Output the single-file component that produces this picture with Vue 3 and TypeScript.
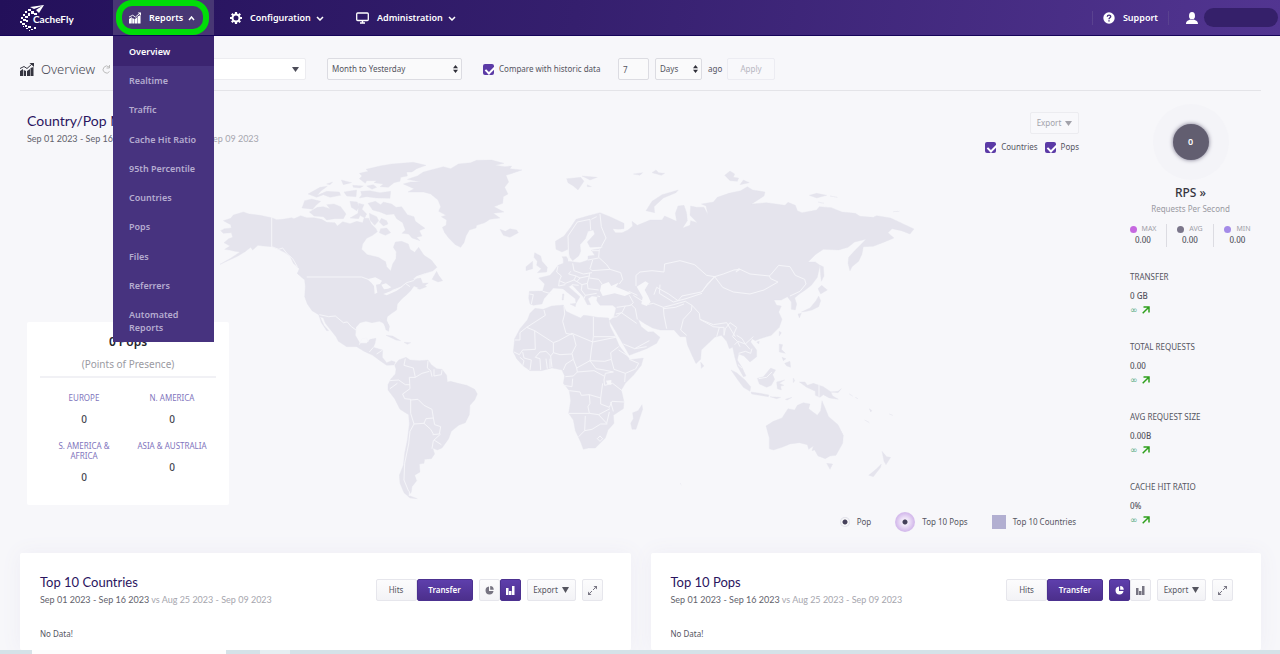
<script setup lang="ts">
import { ref } from 'vue'

interface Stat { label: string; value: string }
interface Region { name: string; count: number }
interface Panel { id: string; title: string; chart: 'pie' | 'bar' }

const reportLinks: string[] = [
  'Overview', 'Realtime', 'Traffic', 'Cache Hit Ratio', '95th Percentile',
  'Countries', 'Pops', 'Files', 'Referrers', 'Automated Reports',
]
const regions: Region[] = [
  { name: 'EUROPE', count: 0 },
  { name: 'N. AMERICA', count: 0 },
  { name: 'S. AMERICA & AFRICA', count: 0 },
  { name: 'ASIA & AUSTRALIA', count: 0 },
]
const rates = [
  { label: 'MAX', value: '0.00', tone: 'max' },
  { label: 'AVG', value: '0.00', tone: 'avg' },
  { label: 'MIN', value: '0.00', tone: 'min' },
]
const stats: Stat[] = [
  { label: 'TRANSFER', value: '0 GB' },
  { label: 'TOTAL REQUESTS', value: '0.00' },
  { label: 'AVG REQUEST SIZE', value: '0.00B' },
  { label: 'CACHE HIT RATIO', value: '0%' },
]
const panels = ref<Panel[]>([
  { id: 'countries', title: 'Top 10 Countries', chart: 'bar' },
  { id: 'pops', title: 'Top 10 Pops', chart: 'pie' },
])
const compare = ref(true)
const showCountries = ref(true)
const showPops = ref(true)
const daysAgo = ref('7')
</script>

<template>
  <div class="page">
    <header class="topbar">
      <a href="#" class="logo" aria-label="CacheFly">
        <svg width="54" height="28" viewBox="0 0 54 28">
          <path d="M10 2 24 0 19 8 16 5 22 1 14 4Z" fill="#fff" />
          <g fill="#fff">
            <path d="M8 4h3v2H8zM11 6h3v3h-3zM14 8h3v2h-3zM5 6h2v2H5zM8 8h2v3H8zM3 9h2v2H3zM5 11h3v2H5zM1 12h2v2H1zM3 14h3v2H3zM0 16h2v2H0zM6 15h2v2H6zM2 18h3v2H2zM5 20h2v2H5zM8 21h3v2H8zM3 21h1v1H3zM6 23h2v1H6zM11 24h2v1h-2zM14 22h2v2h-2zM9 25h1v1H9z" />
            <text x="13" y="18" class="logo-text">CacheFly</text>
          </g>
        </svg>
      </a>
      <nav class="nav">
        <div class="tab active">
          <button type="button" class="tab-btn">
            <svg width="12" height="12" viewBox="0 0 13 12" fill="currentColor"><path d="M0 7 3 5v7H0zM3.500 6 6 7v5H3.500zM6.500 7 9 5v7H6.500zM9.500 4 12.500 3v9h-3z" /><path d="M0 5 4 3l3 2 4-3.500" fill="none" stroke="currentColor" /><path d="M9.500 0H13v3.500z" /></svg>
            <span>Reports</span>
            <svg width="7" height="5" viewBox="0 0 7 5" class="line"><path d="m1 4 2.500-3L6 4" /></svg>
          </button>
          <span class="ring"></span>
          <ul class="menu">
            <li v-for="(link, i) in reportLinks" :key="link">
              <a href="#" :class="{ current: i === 0 }">{{ link }}</a>
            </li>
          </ul>
        </div>
        <div class="tab">
          <button type="button" class="tab-btn">
            <svg width="12" height="12" viewBox="0 0 12 12" fill="none" stroke="currentColor"><circle cx="6" cy="6" r="3.500" stroke-width="2" /><path d="M6 0v2M6 10v2M0 6h2M10 6h2M1.800 1.800l1.400 1.400M8.800 8.800l1.400 1.400M1.800 10.200l1.400-1.400M8.800 3.200l1.400-1.400" stroke-width="2.200" /></svg>
            <span>Configuration</span>
            <svg width="8" height="5" viewBox="0 0 8 5" class="line"><path d="m1 1 3 3 3-3" /></svg>
          </button>
        </div>
        <div class="tab">
          <button type="button" class="tab-btn">
            <svg width="13" height="12" viewBox="0 0 13 12" fill="none" stroke="currentColor"><rect x=".7" y="1" width="11.600" height="7.500" rx="1" stroke-width="1.300" /><path d="M6.500 8.500v2M4 11h5" stroke-width="1.500" /></svg>
            <span>Administration</span>
            <svg width="8" height="5" viewBox="0 0 8 5" class="line"><path d="m1 1 3 3 3-3" /></svg>
          </button>
        </div>
      </nav>
      <a href="#" class="support">
        <svg width="12" height="12" viewBox="0 0 12 12"><circle cx="6" cy="6" r="5.700" fill="#fff" /><path d="M4.300 4.700C4.300 2.500 7.800 2.600 7.700 4.600 7.600 5.800 6 5.700 6 7.200M6 8.200v1.300" fill="none" stroke="#45307f" stroke-width="1.400" /></svg>
        <span>Support</span>
      </a>
      <button type="button" class="account" aria-label="Account">
        <svg width="12" height="12" viewBox="0 0 12 12" fill="#fff"><ellipse cx="6" cy="3.800" rx="3" ry="3.800" /><path d="M0 12c0-3 2-3.500 4.500-4.500C5.500 8.200 6.500 8.200 7.500 7.500 10 8.500 12 9 12 12z" /></svg>
        <span class="redacted"></span>
      </button>
    </header>

    <form class="toolbar" @submit.prevent>
      <h1 class="title">
        <svg width="14" height="13" viewBox="0 0 14 13" fill="#34343f"><path d="M0 8l3-2v7H0zM3.700 7 6 8v5H3.700zM7 8l3-2v7H7zM10.500 5 13.500 4v9h-3z" /><path d="M0 5.500 4 3.500l3 2 5-4.500" fill="none" stroke="#34343f" /><path d="M9.500 0H14v4z" /></svg>
        <span>Overview</span>
        <svg width="9" height="9" viewBox="0 0 9 9" fill="none" stroke="#bbb"><path d="M7.500 6.500A3.500 3.500 0 1 1 7 2M7.500 0v3h-3" /></svg>
      </h1>
      <div class="pick wide">
        <select aria-label="Service"><option></option></select>
        <svg width="7" height="5" viewBox="0 0 7 5"><path d="M0 0h7L3.500 5z" fill="#4c4c58" /></svg>
      </div>
      <div class="pick month">
        <select aria-label="Period"><option>Month to Yesterday</option></select>
        <svg width="5" height="8" viewBox="0 0 5 8"><path d="M0 3.300 2.500 0 5 3.300zM0 4.700h5L2.500 8z" fill="#30303a" /></svg>
      </div>
      <label class="check compare"><input v-model="compare" type="checkbox"><span>Compare with historic data</span></label>
      <input v-model="daysAgo" class="amount" aria-label="Amount" type="text">
      <div class="pick unit">
        <select aria-label="Unit"><option>Days</option></select>
        <svg width="5" height="8" viewBox="0 0 5 8"><path d="M0 3.300 2.500 0 5 3.300zM0 4.700h5L2.500 8z" fill="#30303a" /></svg>
      </div>
      <span class="ago">ago</span>
      <button type="submit" class="apply" disabled>Apply</button>
    </form>

    <main>
      <section class="overview">
        <div class="map-area">
          <div class="map-head">
            <div>
              <h2>Country/Pop Map</h2>
              <p class="dates">Sep 01 2023 - Sep 16 2023 <span>vs Aug 25 2023 - Sep 09 2023</span></p>
            </div>
            <div class="map-tools">
              <button type="button" class="export faded">Export <svg width="7" height="5" viewBox="0 0 7 5"><path d="M0 0h7L3.500 5z" fill="currentColor" /></svg></button>
              <div class="toggles">
                <label class="check"><input v-model="showCountries" type="checkbox"><span>Countries</span></label>
                <label class="check"><input v-model="showPops" type="checkbox"><span>Pops</span></label>
              </div>
            </div>
          </div>

          <div class="map-body">
            <div class="pops">
              <h3>0 Pops</h3>
              <p>(Points of Presence)</p>
              <dl>
                <div v-for="region in regions" :key="region.name">
                  <dt>{{ region.name }}</dt>
                  <dd>{{ region.count }}</dd>
                </div>
              </dl>
            </div>
            <svg class="world" viewBox="220 155 700 350" role="img" aria-label="World map">
              <!-- North America and Greenland -->
              <g transform="translate(210 150) scale(.33333)">
                <path class="land" d="M40 212 62 205 70 195 100 186 118 192 150 196 185 203 200 209 218 208 245 203 252 206 272 197 290 203 312 203 335 208 350 217 375 218 382 228 398 215 420 221 440 214 458 218 462 205 476 205 484 222 498 236 502 245 488 256 470 265 458 282 455 298 472 314 505 322 527 335 530 350 542 363 548 342 558 326 559 306 550 292 556 276 575 274 595 282 600 298 614 307 626 292 642 316 664 330 681 352 668 363 645 370 620 378 608 388 632 384 638 400 655 399 640 410 626 414 612 408 602 422 590 434 576 446 562 462 560 480 545 490 532 500 530 512 538 530 536 544 528 540 522 520 508 514 486 518 468 514 450 518 438 532 436 556 450 580 470 580 480 568 498 565 495 580 490 592 518 600 517 622 530 638 545 632 556 636 552 645 530 646 510 632 488 616 462 604 440 590 410 590 385 574 378 560 362 540 346 520 340 504 330 500 342 526 356 542 350 542 334 518 326 494 306 482 292 462 284 440 286 410 284 390 262 370 268 356 250 340 240 318 222 306 205 298 186 290 160 288 144 286 128 300 122 292 104 306 80 320 50 334 28 344 62 325 90 306 74 304 58 300 44 298 60 288 42 278 56 266 68 262 64 248 40 250 32 242 44 236 64 234 62 224Z" />
                <path class="land" d="M580 102 602 96 632 96 592 88 622 78 640 66 700 50 722 56 745 42 782 38 800 31 845 30 882 40 856 46 885 50 905 48 900 56 936 60 888 76 896 96 884 112 894 132 880 140 878 160 852 170 882 186 850 190 870 204 840 208 824 218 800 226 798 234 778 240 768 258 762 278 752 292 736 284 716 264 704 248 697 232 708 226 710 210 694 200 708 196 686 184 692 170 684 150 662 132 640 126 594 126 612 116 598 110Z" />
                <path class="land" d="M448 70 475 64 468 58 510 48 545 42 610 37 648 46 620 56 606 66 590 66 592 78 572 82 570 94 552 98 535 112 510 110 520 102 492 98 500 92 470 92 466 100 448 86 456 78Z" />
                <path class="land" d="M452 124 480 122 510 128 542 124 540 145 500 144 470 140 448 144 455 134ZM394 90 425 98 400 104ZM402 126 440 120 438 140 410 138ZM294 132 330 112 352 109 332 124 322 136 350 124 388 126 392 136 360 142 340 134 320 142ZM350 102 368 96 360 104ZM428 106 460 108 450 114 430 112ZM470 108 490 104 500 112 486 118Z" />
                <path class="land" d="M284 152 305 147 332 154 318 166 308 178 296 176 276 174ZM298 186 322 172 340 170 360 176 350 164 372 162 392 170 408 192 400 206 374 206 350 210 340 200 312 198ZM420 154 442 156 446 172 440 182 424 172ZM446 160 462 164 456 178 470 192 464 204 450 196 446 206 420 204 444 190Z" />
                <path class="land" d="M474 160 496 154 512 164 520 156 545 162 558 172 575 170 592 194 612 200 616 214 645 235 628 242 636 258 620 262 630 272 606 264 596 252 576 250 586 240 578 218 560 206 552 192 530 194 510 186 488 180ZM514 205 530 212 534 222 520 228 508 216ZM512 236 530 234 542 248 526 256 508 248ZM478 190 500 200 506 212 494 226 480 210Z" />
                <path class="land" d="M666 388 680 364 686 376 698 392 684 396ZM622 416 644 406 650 410 630 418ZM870 238 886 244 900 236 920 240 925 248 900 262 880 256ZM262 370 284 380 292 388 278 384Z" />
                <path class="water" d="M472 388 496 382 516 392 510 402 498 404 502 428 494 432 492 408 484 398ZM514 404 528 400 544 412 534 416 522 418ZM520 432 545 422 580 408 560 422 530 436Z" />
                <path class="edge" d="M185 202V290L206 298 218 294 232 312 248 326 262 350M290 381H455L480 390M545 422 572 412 590 398 610 392 624 380 645 372M328 494 356 500 376 498 400 518 412 516 424 530 438 540M448 584 456 566 470 564 474 576M490 592 478 606M518 600 500 612M586 400 600 410" />
              </g>
              <!-- South America and Africa -->
              <g transform="translate(360 320) scale(.33333)">
                <path class="land" d="M104 135 116 120 138 112 150 120 178 122 204 120 214 134 230 146 246 148 260 166 262 186 272 184 294 190 320 196 344 208 352 222 344 240 330 256 328 284 316 308 296 316 274 334 266 356 246 384 232 390 218 384 224 402 214 416 194 418 192 430 178 432 180 456 164 466 170 482 156 500 154 516 146 526 172 536 150 534 132 518 120 490 118 466 130 436 134 400 142 360 148 312 146 284 120 268 104 236 84 210 84 194 92 178 106 162 108 148Z" />
                <path class="land" d="M525-35 550-32 575-42 610-45 618-26 640-16 662-6 670-14 684-13 712-8 746-6 750 18 766 50 778 78 800 106 810 119 850 114 844 136 820 166 796 190 784 210 792 245 790 266 760 286 762 310 744 330 736 354 706 384 686 384 670 388 662 366 646 332 640 300 626 280 632 242 628 212 610 190 614 168 606 150 576 144 545 152 510 152 490 138 470 116 460 96 464 56 480 26 502 0 510-20Z" />
                <path class="land" d="M846 254 848 268 840 292 828 328 816 328 812 310 820 296 818 278 834 272ZM78 46 98 48 122 62 108 60ZM132 67 152 68 142 73ZM62-4 76-4 88 18 84 30 74 16Z" />
                <path class="edge" d="M136 116 132 136 160 144 166 172 148 172 150 206 128 222 134 236 152 238 152 280 162 312 150 334 146 372 134 430 132 480 146 514M88 182 116 180 136 194 150 194M90 206 112 190M204 122 202 144 212 152 216 170M246 150 244 164 222 168 222 148M166 172 186 160 208 154M152 240 174 238 192 256 216 268 220 294 198 296 192 310 162 312M220 294 224 314 242 320 238 342 218 344M192 310 212 328 220 342M242 342 220 362 216 386M222 360 244 374M148 514V528" />
                <path class="edge" d="M552-30 556-14 528 4 500 22 524 32 580 68 596 62 636 40 698 66 776 50M612-42 614-18 608 4 618 40 638 44M700-10V50M700 50 694 90 690 124M702 50H766M640 44 648 76 636 100 640 118 618 132 610 150M524 32 526 88 488 90 478 104 462 96M464 60H480V38L500 22M580 68 580 98 600 104 636 102M580 98 572 108 576 142M526 112 540 96 558 94 572 108M526 112 540 116 542 150M558 116 562 146M570 116 570 144M488 96 492 114 514 120 510 150M480 112 492 122 488 138M640 118 650 144 690 122 708 146 732 150 760 156M690 122 734 124 754 118 752 98 776 80M776 90 804 108M754 118 762 148 796 160 824 148M808 118 836 130 826 148M796 160 794 186M760 156 736 160 732 180 734 196 758 190 786 212M650 144 652 156 702 152 732 168M616 170 640 168 652 156M610 196 636 200 638 176M628 212 660 216 664 226 688 224 690 250 684 260 688 280 626 280M688 224 722 234 728 190M722 234 722 252 748 262 756 244 792 246M752 246 760 274M688 280 716 284 750 266M716 284 740 310 748 276M676 288 674 332 656 350M674 332 696 328 722 312 742 312M712 356 720 348 728 356 720 364Z" />
                <path class="water" d="M738 182 754 180 754 194 742 192Z" />
              </g>
              <!-- Europe and Asia -->
              <g transform="translate(500 150) scale(.33333)">
                <path class="land" d="M100 466 90 462 86 444 88 424 128 423 134 402 116 384 150 376 162 362 174 346 190 340 190 322 200 320 206 334 240 338 264 330 264 318 284 316 274 300 300 296 310 290 270 292 262 276 284 252 280 240 264 244 256 266 240 284 242 304 236 318 218 332 210 322 204 298 186 306 168 298 166 274 192 258 212 232 228 208 262 198 300 188 330 200 372 220 372 236 356 238 338 236 346 248 366 248 384 240 398 228 396 214 412 226 450 210 486 210 494 198 530 214 526 190 534 168 552 166 560 190 562 212 548 234 570 226 572 212 592 218 570 196 572 168 590 172 612 172 624 194 618 168 604 162 640 156 652 142 686 130 722 122 742 110 758 120 795 126 792 138 755 162 800 158 855 166 864 157 886 166 892 182 906 188 950 180 958 170 994 173 1026 186 1066 190 1080 199 1120 202 1130 197 1172 204 1210 222 1242 237 1230 252 1204 242 1176 236 1164 248 1182 264 1148 278 1120 289 1090 290 1086 312 1076 334 1056 350 1050 363 1044 340 1046 322 1066 300 1098 268 1064 276 1044 292 1016 300 970 298 946 314 924 336 946 336 960 346 952 382 934 406 916 420 898 432 884 444 890 462 886 480 874 478 874 456 862 440 844 450 822 450 830 466 844 468 836 486 846 508 838 532 814 556 780 566 766 572 756 566 752 576 770 600 770 620 750 636 732 618 716 612 712 630 726 652 738 678 730 680 712 648 704 620 698 592 688 596 680 574 664 556 644 562 604 600 602 628 588 641 576 616 562 584 558 560 540 560 522 540 480 540 458 534 436 522 414 508 424 530 444 546 460 545 480 562 470 580 440 596 388 616 370 584 346 542 328 512 342 500 348 474 338 466 300 466 290 452 292 440 276 438 264 446 272 464 262 464 250 440 216 404 206 410 240 440 228 460 226 446 188 416 160 414 132 446 126 462Z" />
                <path class="land" d="M104 308 122 318 126 334 142 352 140 366 112 368 124 356 110 346 112 334 102 322ZM78 350 98 334 98 356 78 362ZM200 86 222 84 242 82 252 94 234 120 220 108 204 98ZM246 78 292 82 270 90ZM262 104 274 110 262 110ZM438 182 456 154 486 134 535 120 528 128 490 144 462 170 464 188ZM400 72 428 68 420 76ZM456 68 468 60 476 68 494 70 484 76ZM186 320 198 320 194 332ZM210 462 228 460 226 470ZM188 432H192L190 450H186ZM674 76 690 63 704 72 700 82 716 84 712 94 690 92ZM720 104 730 90 748 98ZM928 136 950 130 980 136 950 144ZM990 138 1012 142ZM954 156 972 160ZM1180 185 1198 184Z" />
                <path class="land" d="M960 346 970 350 972 378 964 394 962 376ZM954 416 965 406 982 420 962 432ZM904 486 930 474 948 452 956 438 962 452 956 470 936 480 920 484ZM894 492 904 490 898 504Z" />
                <path class="water" d="M300 422 304 404 326 396 334 408 342 404 356 398 348 410 394 430 374 438 344 430 308 438ZM410 410 436 394 446 400 434 420 444 438 452 456 440 468 424 462 428 442ZM190 416 210 446 200 446Z" />
                <path class="edge" d="M206 334 204 258 232 216 270 208 272 240M300 192 304 230 318 264 304 290M274 208 290 200M298 298 296 322 320 344 330 358 362 368 368 388 358 402M264 330 296 324M276 302H298M278 330 270 356 276 362 330 358M218 340 222 362 250 372 276 368M174 348 170 366 184 378 178 392 196 400 222 390 228 378 206 372 212 364M228 378 240 384 268 378 268 368M222 390 246 404 262 400 268 378M240 384 230 396M262 400 264 416 296 420M268 384 296 388 306 402M246 404 244 420 256 436 290 430M216 404 236 406M256 436 252 446M88 432 100 434 94 462M128 424 156 432M178 392 176 408 196 404M292 438 300 440M388 436 400 458 392 466 350 472M392 462 406 476 412 508M348 492 366 488 376 468M336 502 350 500 364 488 410 520M400 436 428 454M386 424 412 436M440 464 460 460 490 472 492 496 500 536M408 408 408 376 420 366 456 362 492 366 494 342 540 332 584 344 620 376 644 380 604 426 546 438 534 452 506 432 470 412 462 434M480 404 478 430 520 456 558 446 606 430M490 472 520 464 556 454 576 466 574 482 550 508 542 540 560 556M490 476 526 472 552 462M644 380 670 372 702 360 720 358 708 366 716 356 750 372 808 378 814 372 836 346 870 350 886 376 914 388 918 402 900 424 870 438M576 466 598 490 600 508 640 524 680 518 696 544 706 560M600 508 640 530 658 532 650 560M644 380 662 404 668 412 700 426 750 432 792 420 834 396 812 386 808 378M658 532H672V556L676 536 690 518 710 532 698 560 712 574 720 590M710 556 726 566 736 582 760 560M704 584 714 574 736 582 750 598M716 610 736 604 752 610 756 596M370 582 404 596 440 590M404 596 448 572M644 380 622 402 606 426" />
              </g>
              <!-- Southeast Asia and Oceania -->
              <g transform="translate(660 320) scale(.33333)">
                <path class="land" d="M213 150 230 158 255 180 272 200 270 214 250 202 232 178ZM273 216 300 220 327 225 325 230 275 222ZM292 175 310 170 332 144 347 150 338 164 344 178 334 196 320 202 298 192ZM350 186 374 180 358 190 372 196 362 198 364 210 352 206ZM418 186 435 186 442 196 460 190 490 200 512 215 518 228 535 238 508 234 490 224 480 232 466 226 466 214 440 202ZM512 216 534 214 544 206 534 218ZM330 230 362 232 350 236ZM376 238 396 232 382 240ZM358 72 368 74 364 88 376 100 358 96ZM374 130 390 124 392 142 380 138ZM366 112 378 116 370 122ZM358 34 364 38 358 48ZM122 126 132 138 124 145ZM400 174 404 182 400 188ZM290 66 298 64 296 72Z" />
                <path class="land" d="M318 318 340 304 366 294 384 266 404 270 412 256 430 248 450 252 446 266 472 286 482 272 486 242 496 266 506 290 534 314 550 346 548 370 528 406 510 408 496 416 474 408 464 390 456 392 460 378 446 388 442 374 418 368 390 372 366 382 340 390 328 386 328 354ZM500 430 518 432 510 448ZM666 394 680 410 692 412 678 434 672 424ZM664 432 662 442 640 470 626 466 648 448ZM568 222 578 228ZM586 232 594 236ZM628 266 636 272 632 276ZM614 300 628 308ZM688 282 698 286ZM60 490 64 494Z" />
                <path class="edge" d="M477 194V230M296 176 320 172 336 156M234 134 246 144" />
              </g>
            </svg>
          </div>

          <ul class="legend">
            <li><i class="dot"></i>Pop</li>
            <li><i class="dot top"></i>Top 10 Pops</li>
            <li><i class="square"></i>Top 10 Countries</li>
          </ul>
        </div>

        <aside class="metrics">
          <div class="halo"><div class="gauge">0</div></div>
          <h2><a href="#">RPS »</a></h2>
          <p class="sub">Requests Per Second</p>
          <ul class="rates">
            <li v-for="rate in rates" :key="rate.label">
              <span class="rate-label"><i :class="rate.tone"></i>{{ rate.label }}</span>
              <b>{{ rate.value }}</b>
            </li>
          </ul>
          <dl class="stats">
            <div v-for="stat in stats" :key="stat.label">
              <dt>{{ stat.label }}</dt>
              <dd>{{ stat.value }}</dd>
              <dd class="trend"><span>∞</span><svg width="8" height="8" viewBox="0 0 8 8"><path d="M.700 7.300 7 1M1.500 1H7v5.500" fill="none" stroke="#2fa01c" stroke-width="1.500" /></svg></dd>
            </div>
          </dl>
        </aside>
      </section>

      <section class="cards">
        <article v-for="panel in panels" :key="panel.id" class="card">
          <div class="card-head">
            <div>
              <h2>{{ panel.title }}</h2>
              <p class="dates">Sep 01 2023 - Sep 16 2023 <span>vs Aug 25 2023 - Sep 09 2023</span></p>
            </div>
            <div class="actions">
              <div class="group">
                <button type="button" class="hits">Hits</button>
                <button type="button" class="transfer on">Transfer</button>
              </div>
              <div class="group">
                <button type="button" class="icon" :class="{ on: panel.chart === 'pie' }" aria-label="Pie chart" @click="panel.chart = 'pie'">
                  <svg width="9" height="9" viewBox="0 0 9 9" fill="currentColor"><path d="M4 .500V5h4.500A4 4 0 1 1 4 .500" /><path d="M5.200 0A4 4 0 0 1 8.800 3.800H5.200z" /></svg>
                </button>
                <button type="button" class="icon" :class="{ on: panel.chart === 'bar' }" aria-label="Bar chart" @click="panel.chart = 'bar'">
                  <svg width="9" height="10" viewBox="0 0 9 10" fill="currentColor"><path d="M0 3h2.500v7H0zM3 6h2.500v4H3zM6 1h2.500v9H6z" /></svg>
                </button>
              </div>
              <button type="button" class="export">Export <svg width="7" height="6" viewBox="0 0 7 6"><path d="M0 0h7L3.500 6z" fill="currentColor" /></svg></button>
              <button type="button" class="icon" aria-label="Expand">
                <svg width="9" height="9" viewBox="0 0 9 9" fill="currentColor"><path d="M5.500 0H9v3.500zM0 5.500V9h3.500z" /><path d="M5 4l2-2M4 5 2 7" stroke="currentColor" /></svg>
              </button>
            </div>
          </div>
          <p class="empty">No Data!</p>
        </article>
      </section>
    </main>
    <footer class="strip"><span></span><span></span></footer>
  </div>
</template>

<style>
body { background: #f7f7fa; }
</style>

<style scoped>
.page { font-family: "Noto Sans", "Open Sans", sans-serif; font-size: 8px; line-height: 12px; color: #55555f; background: #f7f7fa; }
.page * { box-sizing: border-box; }
h1, h2, h3, p, ul, dl, dd { margin: 0; padding: 0; font-weight: 400; }
ul { list-style: none; }
a { color: inherit; text-decoration: none; }
button, input, select { font: inherit; color: inherit; margin: 0; }
button { cursor: pointer; }
svg { flex: none; }

.topbar { display: flex; height: 36px; border-bottom: 1px solid #16045a; background: linear-gradient(100deg, #23105a, #351f6e 45%, #523591); color: #fff; }
.logo { width: 113px; padding: 5px 0 0 20px; }
.logo-text { font: 700 10px Lato, sans-serif; }
.nav { display: flex; flex: 1; }
.tab { position: relative; min-width: 126px; }
.tab.active { min-width: 101px; background: #483774; }
.tab-btn { display: flex; align-items: center; gap: 8px; height: 36px; padding: 0 16px; border: 0; background: none; font-size: 9px; font-weight: 600; white-space: nowrap; }
.tab-btn svg:last-child { margin-left: -3px; }
.line { fill: none; stroke: currentColor; stroke-width: 1.500; }
.ring { position: absolute; inset: 0 5px 0 3px; border: 6px solid #00dd08; border-radius: 16px; pointer-events: none; }
.menu { position: absolute; z-index: 2; top: 36px; left: 0; width: 100%; min-height: 306px; display: flex; flex-direction: column; justify-content: space-between; background: #47337f; }
.menu a { display: block; padding: 8px 4px 8px 16px; color: #b5acd0; font-size: 9px; font-weight: 600; line-height: 13px; }
.menu li:last-child a { width: min-content; }
.menu .current { padding-top: 9px; background: #3b2470; color: #fff; }
.support { display: flex; align-items: center; align-self: center; gap: 8px; height: 14px; padding: 0 10px; border: solid #5a4290; border-width: 0 1px; font-size: 9px; font-weight: 600; }
.account { display: flex; align-items: center; gap: 6px; margin-left: 17px; padding: 0 2px 0 0; border: 0; background: none; }
.redacted { width: 74px; height: 19px; border-radius: 10px; background: #35206a; }

.toolbar { display: flex; align-items: center; height: 55px; margin: 0 19px 0 20px; padding-top: 12px; border-bottom: 1px solid #e4e4e8; }
.title { display: flex; align-items: center; gap: 7px; width: 104px; font-size: 13px; font-weight: 300; line-height: 20px; color: #4a4a55; }
.pick { position: relative; height: 22px; }
.pick select { appearance: none; width: 100%; height: 100%; padding: 0 4px; border: 1px solid #dcdce2; border-radius: 2px; background: #fafafb; }
.pick svg { position: absolute; top: 7px; right: 4px; pointer-events: none; }
.wide { width: 182px; }
.wide select { border-color: #ececf0; background: #fff; }
.wide svg { top: 9px; right: 7px; }
.month { width: 135px; margin: 0 21px; }
.check { display: inline-flex; align-items: center; gap: 5px; }
.check input { position: relative; appearance: none; width: 11px; height: 11px; border-radius: 2px; background: #5b3aa6; }
.check input:checked::after { content: ""; position: absolute; left: 4px; top: 1px; width: 4px; height: 7px; border: solid #fff; border-width: 0 2px 2px 0; transform: rotate(45deg); }
.compare { width: 135px; white-space: nowrap; }
.amount { width: 31px; height: 22px; padding: 0 4px; border: 1px solid #dcdce2; border-radius: 2px; background: #fafafb; }
.unit { width: 47px; margin: 0 6px; }
.ago { width: 19px; }
.apply { width: 48px; height: 22px; border: 1px solid #ececf2; border-radius: 2px; background: #f8f8fb; color: #b6b6c0; }

.overview { display: flex; padding: 0 19px 2px 27px; }
.map-area { flex: 1; min-width: 0; padding-top: 21px; }
.map-head { display: flex; justify-content: space-between; height: 43px; }
h2 { font-family: Lato, sans-serif; font-size: 14px; line-height: 18px; color: #2b1560; }
.dates { margin-top: 4px; font-family: Lato, sans-serif; font-size: 9px; line-height: 10px; color: #62626c; }
.dates span { color: #a6a6ae; }
.map-tools { display: flex; flex-direction: column; align-items: flex-end; gap: 7px; margin-right: 41px; }
.toggles { display: flex; gap: 7px; }
.export { display: inline-flex; align-items: center; justify-content: center; gap: 4px; width: 49px; height: 22px; padding: 0; border: 1px solid #e6e6ec; border-radius: 2px; background: linear-gradient(#fcfcfd, #f3f3f6); }
.faded { border-color: #ececf0; background: #f8f8fb; color: #a2a2aa; }
.map-body { display: flex; align-items: flex-end; }
.pops { position: relative; width: 202px; flex: none; min-height: 183px; padding: 11px 13px 2px; border-radius: 2px; background: #fff; text-align: center; }
.pops h3 { font-size: 12px; font-weight: 600; line-height: 18px; color: #25252d; }
.pops p { padding: 7px 0 6px; border-bottom: 2px solid #f1f1f5; font-size: 10px; line-height: 12px; color: #9a9aa2; }
.pops dl { display: grid; grid-template-columns: 1fr 1fr; padding-top: 15px; }
.pops dt { padding: 0 8px; color: #8175bd; line-height: 10px; }
.pops dl div:nth-child(even) dt { padding: 0; white-space: nowrap; }
.pops dd { margin: 10px 0 15px; font-size: 10px; font-weight: 500; line-height: 13px; color: #45454f; }
.world { display: block; flex: 0 1 700px; min-width: 0; margin-left: -9px; }
.land { fill: #e5e4ed; stroke: #e5e4ed; stroke-width: 1; stroke-linejoin: round; }
.water { fill: #f7f7fa; }
.edge { fill: none; stroke: #f5f5f9; stroke-width: 3; stroke-linejoin: round; }
.legend { display: flex; align-items: center; justify-content: flex-end; gap: 24px; height: 33px; margin-right: 44px; }
.legend li { display: flex; align-items: center; gap: 7px; }
.dot { width: 10px; height: 10px; border-radius: 50%; background: radial-gradient(#45405a 0 2px, #fff 3px, #dadae4 5px); }
.dot.top { width: 20px; height: 20px; background: radial-gradient(#45405a 0 2px, #f4ecfa 3px, #d5bcec 9px); }
.square { width: 14px; height: 14px; background: #b2afd1; }

.metrics { width: 141px; padding-top: 13px; text-align: center; }
.halo { display: flex; align-items: center; justify-content: center; width: 76px; height: 76px; margin: 0 auto; border-radius: 50%; background: #f4f4f8; }
.gauge { width: 36px; height: 36px; border-radius: 50%; background: #625e70; box-shadow: 0 0 4px #77738a; color: #fff; font-size: 9px; font-weight: 600; line-height: 36px; }
.metrics h2 { margin-top: 5px; font-family: inherit; font-size: 12px; font-weight: 500; line-height: 16px; color: #35353f; }
.sub { margin-top: 2px; color: #9a9aa2; }
.rates { display: grid; grid-template-columns: repeat(3, 1fr); margin-top: 9px; }
.rates li { height: 23px; border-right: 1px solid #dcdce2; }
.rates li:last-child { border: 0; }
.rate-label { display: flex; align-items: center; justify-content: center; gap: 5px; font-size: 7px; line-height: 10px; color: #a0a0a8; }
.rate-label i { width: 7px; height: 7px; border-radius: 50%; }
.max { background: #c668e0; }
.avg { background: #7b768a; }
.min { background: #a48be8; }
.rates b { font-weight: 500; }
.stats { padding: 24px 0 0 10px; text-align: left; }
.stats div { height: 70px; }
.stats dd { margin-top: 7px; font-weight: 500; }
.stats .trend { display: flex; align-items: center; gap: 4px; margin-top: 2px; color: #55a880; font-family: "DejaVu Sans", sans-serif; font-size: 9px; }

.cards { display: grid; grid-template-columns: 1fr 1fr; gap: 20px; padding: 0 19px 0 20px; }
.card { padding: 20px 20px 10px; border-radius: 2px; background: #fff; box-shadow: 0 0 20px #eeedf5; }
.card-head { display: flex; justify-content: space-between; }
.card h2 { font-size: 13px; }
.actions { display: flex; gap: 6px; margin: 6px 8px 0 0; }
.group { display: flex; }
.actions button { height: 22px; border: 1px solid #e6e6ec; border-radius: 2px; background: linear-gradient(#fcfcfd, #f3f3f6); padding: 0; }
.actions .hits { width: 41px; }
.actions .transfer { width: 56px; }
.actions .icon { display: flex; align-items: center; justify-content: center; width: 21px; color: #777582; }
.actions .on { border-color: #4c3190; background: linear-gradient(#5e3fac, #4c2f8c); color: #fff; font-weight: 600; }
.empty { margin-top: 23px; }
.strip { position: relative; display: flex; gap: 34px; height: 4px; padding-left: 32px; background: #d5e2e8; }
.strip span { width: 194px; background: #fdfdfd; }
.strip span:last-child { width: 30px; background: #e6eef2; }
</style>
